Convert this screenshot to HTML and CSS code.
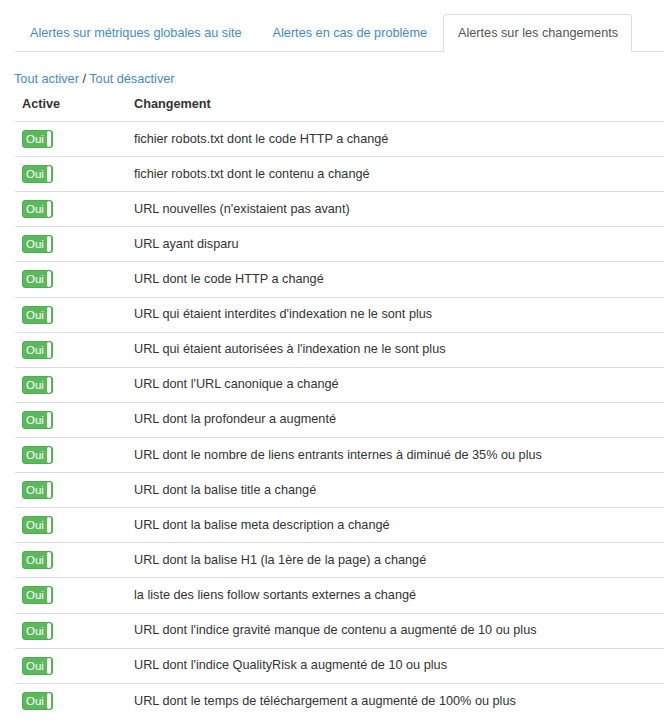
FILE: index.html
```html
<!DOCTYPE html>
<html lang="fr">
<head>
<meta charset="utf-8">
<link rel="stylesheet" href="styles.css">
</head>
<body>
<div class="page">
  <ul class="tabs">
    <li class="tab"><a href="#">Alertes sur métriques globales au site</a></li>
    <li class="tab"><a href="#">Alertes en cas de problème</a></li>
    <li class="tab active"><a href="#">Alertes sur les changements</a></li>
  </ul>
  <p class="toggle-all"><a href="#">Tout activer</a> / <a href="#">Tout désactiver</a></p>
  <table class="alerts">
    <thead>
      <tr><th class="col-active">Active</th><th>Changement</th></tr>
    </thead>
    <tbody>
      <tr><td><span class="switch"><span class="on">Oui</span><span class="handle"></span></span></td><td>fichier robots.txt dont le code HTTP a changé</td></tr>
      <tr><td><span class="switch"><span class="on">Oui</span><span class="handle"></span></span></td><td>fichier robots.txt dont le contenu a changé</td></tr>
      <tr><td><span class="switch"><span class="on">Oui</span><span class="handle"></span></span></td><td>URL nouvelles (n'existaient pas avant)</td></tr>
      <tr><td><span class="switch"><span class="on">Oui</span><span class="handle"></span></span></td><td>URL ayant disparu</td></tr>
      <tr><td><span class="switch"><span class="on">Oui</span><span class="handle"></span></span></td><td>URL dont le code HTTP a changé</td></tr>
      <tr><td><span class="switch"><span class="on">Oui</span><span class="handle"></span></span></td><td>URL qui étaient interdites d'indexation ne le sont plus</td></tr>
      <tr><td><span class="switch"><span class="on">Oui</span><span class="handle"></span></span></td><td>URL qui étaient autorisées à l'indexation ne le sont plus</td></tr>
      <tr><td><span class="switch"><span class="on">Oui</span><span class="handle"></span></span></td><td>URL dont l'URL canonique a changé</td></tr>
      <tr><td><span class="switch"><span class="on">Oui</span><span class="handle"></span></span></td><td>URL dont la profondeur a augmenté</td></tr>
      <tr><td><span class="switch"><span class="on">Oui</span><span class="handle"></span></span></td><td>URL dont le nombre de liens entrants internes à diminué de 35% ou plus</td></tr>
      <tr><td><span class="switch"><span class="on">Oui</span><span class="handle"></span></span></td><td>URL dont la balise title a changé</td></tr>
      <tr><td><span class="switch"><span class="on">Oui</span><span class="handle"></span></span></td><td>URL dont la balise meta description a changé</td></tr>
      <tr><td><span class="switch"><span class="on">Oui</span><span class="handle"></span></span></td><td>URL dont la balise H1 (la 1ère de la page) a changé</td></tr>
      <tr><td><span class="switch"><span class="on">Oui</span><span class="handle"></span></span></td><td>la liste des liens follow sortants externes a changé</td></tr>
      <tr><td><span class="switch"><span class="on">Oui</span><span class="handle"></span></span></td><td>URL dont l'indice gravité manque de contenu a augmenté de 10 ou plus</td></tr>
      <tr><td><span class="switch"><span class="on">Oui</span><span class="handle"></span></span></td><td>URL dont l'indice QualityRisk a augmenté de 10 ou plus</td></tr>
      <tr><td><span class="switch"><span class="on">Oui</span><span class="handle"></span></span></td><td>URL dont le temps de téléchargement a augmenté de 100% ou plus</td></tr>
    </tbody>
  </table>
</div>
</body>
</html>
```

FILE: styles.css
```css
* { box-sizing: border-box; }
html, body { margin: 0; padding: 0; background: #fff; }
body {
  font-family: "Liberation Sans", Arial, Helvetica, sans-serif;
  font-size: 12.7px;
  color: #333;
  line-height: 18px;
}
a { color: #428bca; text-decoration: none; }
.page { padding: 14px 0 0 15px; }
.tabs {
  list-style: none;
  margin: 0;
  padding: 0;
  display: flex;
  border-bottom: 1px solid #ddd;
}
.tab { margin: 0 2px -1px 0; }
.tab a {
  display: block;
  padding: 9px 13px 9px 14px;
  line-height: 18px;
  border: 1px solid transparent;
  border-radius: 4px 4px 0 0;
}
.tab.active a {
  color: #555;
  background: #fff;
  border-color: #ddd #ddd transparent;
}
.toggle-all {
  margin: 19px 0 0 -1px;
  line-height: 16px;
  height: 16px;
}
.alerts {
  border-collapse: collapse;
  width: 100%;
}
.alerts th {
  text-align: left;
  font-weight: bold;
  padding: 8px 7px;
  line-height: 18px;
  border-bottom: 1px solid #ddd;
}
.alerts .col-active { width: 112px; }
.alerts td {
  padding: 8px 7px;
  height: 35.12px;
  line-height: 17px;
  border-top: 1px solid #ddd;
  vertical-align: middle;
}
.switch {
  display: flex;
  width: 31px;
  height: 18px;
  background: #5cb85c;
  border: 1px solid #4cae4c;
  border-radius: 3px;
  overflow: hidden;
}
.switch .on {
  flex: 1;
  color: #fff;
  font-size: 11.5px;
  line-height: 16px;
  padding-left: 3px;
}
.switch .handle {
  width: 4px;
  margin: 0 1px 0 0;
  background: #fff;
  border-radius: 2px;
}
```
